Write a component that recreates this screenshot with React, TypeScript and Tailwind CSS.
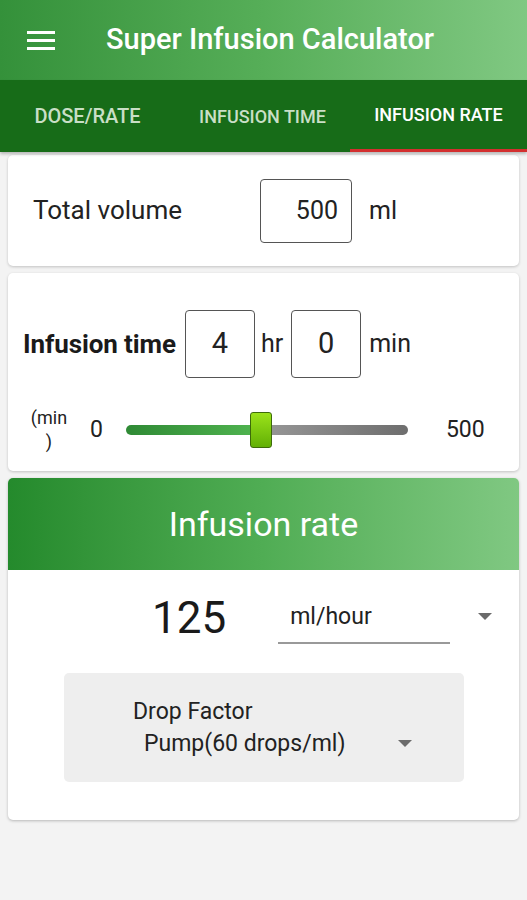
import React from 'react';

function Caret() {
  return (
    <svg width="14" height="8" viewBox="0 0 14 8" className="shrink-0">
      <path d="M0 0 L14 0 L7 7 Z" fill="#6b6b6b" />
    </svg>
  );
}

export default function App() {
  const font = { fontFamily: 'Roboto, "Noto Sans", sans-serif' };

  return (
    <div className="w-[527px] h-[900px] bg-[#f3f3f3] flex flex-col overflow-hidden" style={font}>
      {/* Toolbar */}
      <div className="h-[80px] flex items-center bg-gradient-to-r from-[#34913a] via-[#56ae58] to-[#80c882] shrink-0">
        <div className="w-[106px] flex pl-[27px]">
          <div className="flex flex-col gap-[5px]">
            <span className="block w-[28px] h-[3px] bg-white" />
            <span className="block w-[28px] h-[3px] bg-white" />
            <span className="block w-[28px] h-[3px] bg-white" />
          </div>
        </div>
        <h1 className="text-white text-[29px] font-medium">Super Infusion Calculator</h1>
      </div>

      {/* Tabs */}
      <div className="h-[72px] flex bg-[#176c18] shrink-0 shadow-[0_2px_3px_rgba(0,0,0,0.25)] z-10">
        <div className="w-[175px] flex items-center justify-center text-[#c9dfc6] text-[20px] font-medium">DOSE/RATE</div>
        <div className="w-[175px] flex items-center justify-center text-[#c9dfc6] text-[18px] font-medium">INFUSION TIME</div>
        <div className="flex-1 flex flex-col">
          <div className="flex-1 flex items-center justify-center text-white text-[18px] font-medium">INFUSION RATE</div>
          <div className="h-[3px] bg-[#d32f2f]" />
        </div>
      </div>

      <div className="flex flex-col gap-[7px] px-[8px] pt-[3px]">
        {/* Total volume */}
        <div className="h-[111px] bg-white rounded-[5px] shadow-[0_1px_3px_rgba(0,0,0,0.2)] flex items-center">
          <span className="w-[252px] pl-[25px] text-[26px] text-[#222]">Total volume</span>
          <div className="w-[92px] h-[64px] border border-[#555] rounded-[4px] flex items-center justify-end pr-[13px] text-[25px] text-[#222]">500</div>
          <span className="ml-[17px] text-[25px] text-[#222]">ml</span>
        </div>

        {/* Infusion time */}
        <div className="h-[198px] bg-white rounded-[5px] shadow-[0_1px_3px_rgba(0,0,0,0.2)] flex flex-col">
          <div className="flex items-center pl-[15px] pt-[37px]">
            <span className="text-[26px] font-bold text-[#1a1a1a] tracking-[-0.1px]">Infusion time</span>
            <div className="ml-[9px] w-[70px] h-[68px] border border-[#555] rounded-[4px] flex items-center justify-center text-[29px] text-[#222]">4</div>
            <span className="ml-[6px] text-[25px] text-[#222]">hr</span>
            <div className="ml-[8px] w-[70px] h-[68px] border border-[#555] rounded-[4px] flex items-center justify-center text-[29px] text-[#222]">0</div>
            <span className="ml-[8px] text-[25px] text-[#222]">min</span>
          </div>
          <div className="flex items-center mt-[27px] h-[50px]">
            <span className="w-[44px] ml-[19px] text-[18px] leading-[24px] text-[#222] text-center">(min )</span>
            <span className="ml-[19px] text-[23px] text-[#222]">0</span>
            <div className="relative ml-[23px] w-[282px] h-[10px] rounded-full flex">
              <div className="w-[128px] h-full rounded-l-full bg-gradient-to-r from-[#2f8a35] to-[#4fb34f]" />
              <div className="flex-1 h-full rounded-r-full bg-gradient-to-r from-[#9a9a9a] to-[#6e6e6e]" />
              <div className="absolute left-[124px] top-[-13px] w-[22px] h-[36px] rounded-[3px] border border-[#3d6b0a] bg-gradient-to-b from-[#9be31a] to-[#62b005]" />
            </div>
            <span className="ml-[38px] text-[23px] text-[#222]">500</span>
          </div>
        </div>

        {/* Infusion rate */}
        <div className="h-[342px] bg-white rounded-[5px] shadow-[0_1px_3px_rgba(0,0,0,0.25)] flex flex-col overflow-hidden">
          <div className="h-[92px] flex items-center justify-center bg-gradient-to-r from-[#248a2c] via-[#50ad54] to-[#80c882]">
            <span className="text-white text-[34px]">Infusion rate</span>
          </div>
          <div className="flex items-center pt-[22px] h-[74px]">
            <span className="ml-[144px] text-[44px] text-[#1a1a1a]">125</span>
            <div className="ml-[52px] w-[172px] h-[52px] border-b-2 border-[#999] flex items-center pl-[12px] text-[23px] text-[#222]">ml/hour</div>
            <div className="ml-[28px] -mt-[2px]"><Caret /></div>
          </div>
          <div className="mt-[29px] ml-[56px] w-[400px] h-[109px] bg-[#eeeeee] rounded-[5px] flex flex-col pl-[69px] pt-[24px]">
            <span className="text-[23px] text-[#222] leading-[30px]">Drop Factor</span>
            <div className="flex items-center ml-[11px] mt-[2px]">
              <span className="text-[23px] text-[#222] leading-[30px]">Pump(60 drops/ml)</span>
              <div className="ml-[53px]"><Caret /></div>
            </div>
          </div>
        </div>
      </div>
    </div>
  );
}
